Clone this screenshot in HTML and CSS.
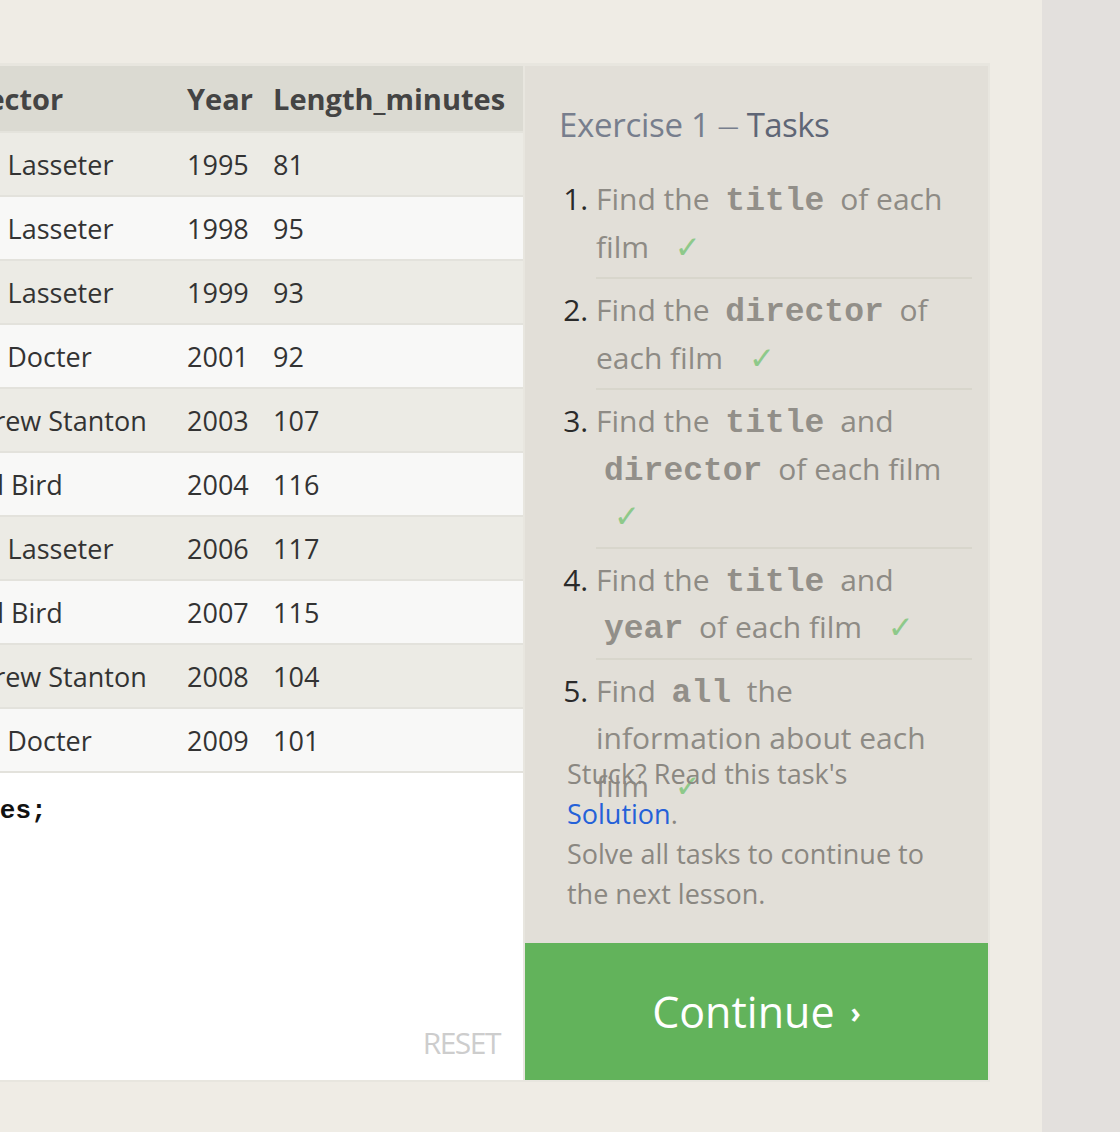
FILE: index.html
```html
<!DOCTYPE html>
<html lang="en">
<head>
<meta charset="utf-8">
<title>SQL Lesson 1 — Exercise</title>
<link rel="stylesheet" href="styles.css">
</head>
<body>
<div class="page">
  <main class="main">
    <div class="stage">
      <section class="results-col">
        <table class="results">
          <colgroup>
            <col class="c-id"><col class="c-title"><col class="c-director"><col class="c-year"><col class="c-length">
          </colgroup>
          <thead>
            <tr><th>Id</th><th>Title</th><th>Director</th><th>Year</th><th>Length_minutes</th></tr>
          </thead>
          <tbody>
            <tr><td>1</td><td>Toy Story</td><td>John Lasseter</td><td>1995</td><td>81</td></tr>
            <tr><td>2</td><td>A Bug's Life</td><td>John Lasseter</td><td>1998</td><td>95</td></tr>
            <tr><td>3</td><td>Toy Story 2</td><td>John Lasseter</td><td>1999</td><td>93</td></tr>
            <tr><td>4</td><td>Monsters, Inc.</td><td>Pete Docter</td><td>2001</td><td>92</td></tr>
            <tr><td>5</td><td>Finding Nemo</td><td>Andrew Stanton</td><td>2003</td><td>107</td></tr>
            <tr><td>6</td><td>The Incredibles</td><td>Brad Bird</td><td>2004</td><td>116</td></tr>
            <tr><td>7</td><td>Cars</td><td>John Lasseter</td><td>2006</td><td>117</td></tr>
            <tr><td>8</td><td>Ratatouille</td><td>Brad Bird</td><td>2007</td><td>115</td></tr>
            <tr><td>9</td><td>WALL-E</td><td>Andrew Stanton</td><td>2008</td><td>104</td></tr>
            <tr><td>10</td><td>Up</td><td>Pete Docter</td><td>2009</td><td>101</td></tr>
          </tbody>
        </table>
        <div class="editor">
          <pre class="code">SELECT * FROM movies;</pre>
          <span class="reset">RESET</span>
        </div>
      </section>
      <aside class="tasks">
        <h3 class="tasks-title">Exercise 1 <span class="dash">—</span> <span class="tasks-word">Tasks</span></h3>
        <ol class="task-list">
          <li>Find the <code>title</code> of each film <span class="check">✓</span></li>
          <li>Find the <code>director</code> of each film <span class="check">✓</span></li>
          <li>Find the <code>title</code> and <code>director</code> of each film <span class="check">✓</span></li>
          <li>Find the <code>title</code> and <code>year</code> of each film <span class="check">✓</span></li>
          <li>Find <code>all</code> the information about each film <span class="check">✓</span></li>
        </ol>
        <p class="stuck">Stuck? Read this task's <a class="solution" href="#">Solution</a>.<br>Solve all tasks to continue to the next lesson.</p>
        <a class="continue" href="#">Continue <span class="chev">›</span></a>
      </aside>
    </div>
  </main>
  <div class="side-strip"></div>
</div>
</body>
</html>
```
FILE: styles.css
```css
html, body {
  margin: 0;
  padding: 0;
}
body {
  font-family: "Open Sans", "Liberation Sans", sans-serif;
  background: #efece5;
  overflow: hidden;
}
.page {
  display: flex;
  height: 1132px;
}
.main {
  flex: 1;
  background: #efece5;
  overflow: hidden;
}
.side-strip {
  width: 78px;
  flex-shrink: 0;
  background: #e3e0dd;
}
.stage {
  box-sizing: border-box;
  display: flex;
  gap: 2px;
  width: 1336px;
  height: 1019px;
  margin: 63px 0 0 -346px;
  border: 2px solid #e8e6df;
  border-top-width: 3px;
  background: #e8e6df;
}

/* results table */
.results-col {
  width: 867px;
  flex-shrink: 0;
  display: flex;
  flex-direction: column;
}
.results {
  width: 867px;
  table-layout: fixed;
  border-collapse: separate;
  border-spacing: 0;
  color: #333333;
  font-size: 27px;
}
.c-id { width: 60px; }
.c-title { width: 216px; }
.c-director { width: 243px; }
.c-year { width: 86px; }
.c-length { width: 262px; }
.results th {
  box-sizing: border-box;
  height: 67px;
  padding: 0 12px;
  text-align: left;
  font-size: 29px;
  font-weight: 700;
  color: #444444;
  background: #dbdad2;
  border-bottom: 2px solid #e4e3dc;
  white-space: nowrap;
}
.results td {
  box-sizing: border-box;
  height: 64px;
  padding: 0 12px;
  border-bottom: 2px solid #e3e2dc;
  white-space: nowrap;
  overflow: hidden;
}
.results tbody tr:nth-child(odd) td { background: #ecebe5; }
.results tbody tr:nth-child(even) td { background: #f8f8f7; }

.editor {
  flex: 1;
  background: #ffffff;
  display: flex;
  flex-direction: column;
  padding: 18px 23px 22px 63px;
}
.code {
  margin: 0;
  font-family: "Liberation Mono", "Courier New", monospace;
  font-size: 26px;
  font-weight: 700;
  line-height: 40px;
  color: #111;
}
.reset {
  margin-top: auto;
  align-self: flex-end;
  font-size: 30px;
  line-height: 30px;
  letter-spacing: -1.5px;
  color: #cdcdcd;
}

/* tasks panel */
.tasks {
  width: 463px;
  flex-shrink: 0;
  background: #e2dfd8;
  display: flex;
  flex-direction: column;
}
.tasks-title {
  margin: 39px 0 0 34px;
  font-size: 33px;
  line-height: 40px;
  font-weight: 400;
  color: #777e8d;
  letter-spacing: -0.3px;
}
.dash {
  font-size: 21px;
  vertical-align: 3px;
}
.tasks-word {
  color: #5f6676;
  letter-spacing: -0.6px;
}
.task-list {
  margin: 22px 0 0 0;
  padding: 0 16px 0 71px;
  height: 586px;
  font-size: 30px;
  line-height: 47.5px;
  color: #8e8b85;
}
.task-list li {
  padding: 7px 14px 7px 0;
  border-bottom: 2px solid #d8d6cc;
}
.task-list li:last-child { border-bottom: 0; }
.task-list li::marker {
  color: #2a2a2a;
}
.task-list code {
  font-family: "Liberation Mono", "Courier New", monospace;
  font-weight: 700;
  font-size: 33px;
  line-height: 1;
  color: #928f89;
  padding: 0 8px;
}
.check {
  margin-left: 18px;
  font-family: "DejaVu Sans", sans-serif;
  font-size: 31px;
  line-height: 1;
  color: #8ec98a;
}
.stuck {
  margin: 0 0 0 42px;
  width: 375px;
  font-size: 27px;
  line-height: 40px;
  color: #8a8781;
}
.solution {
  color: #2461d8;
  text-decoration: none;
}
.continue {
  margin-top: auto;
  height: 137px;
  display: flex;
  align-items: center;
  justify-content: center;
  background: #62b35b;
  color: #ffffff;
  font-size: 43px;
  text-decoration: none;
}
.chev {
  font-size: 28px;
  font-weight: 700;
  margin-left: 16px;
}
```
